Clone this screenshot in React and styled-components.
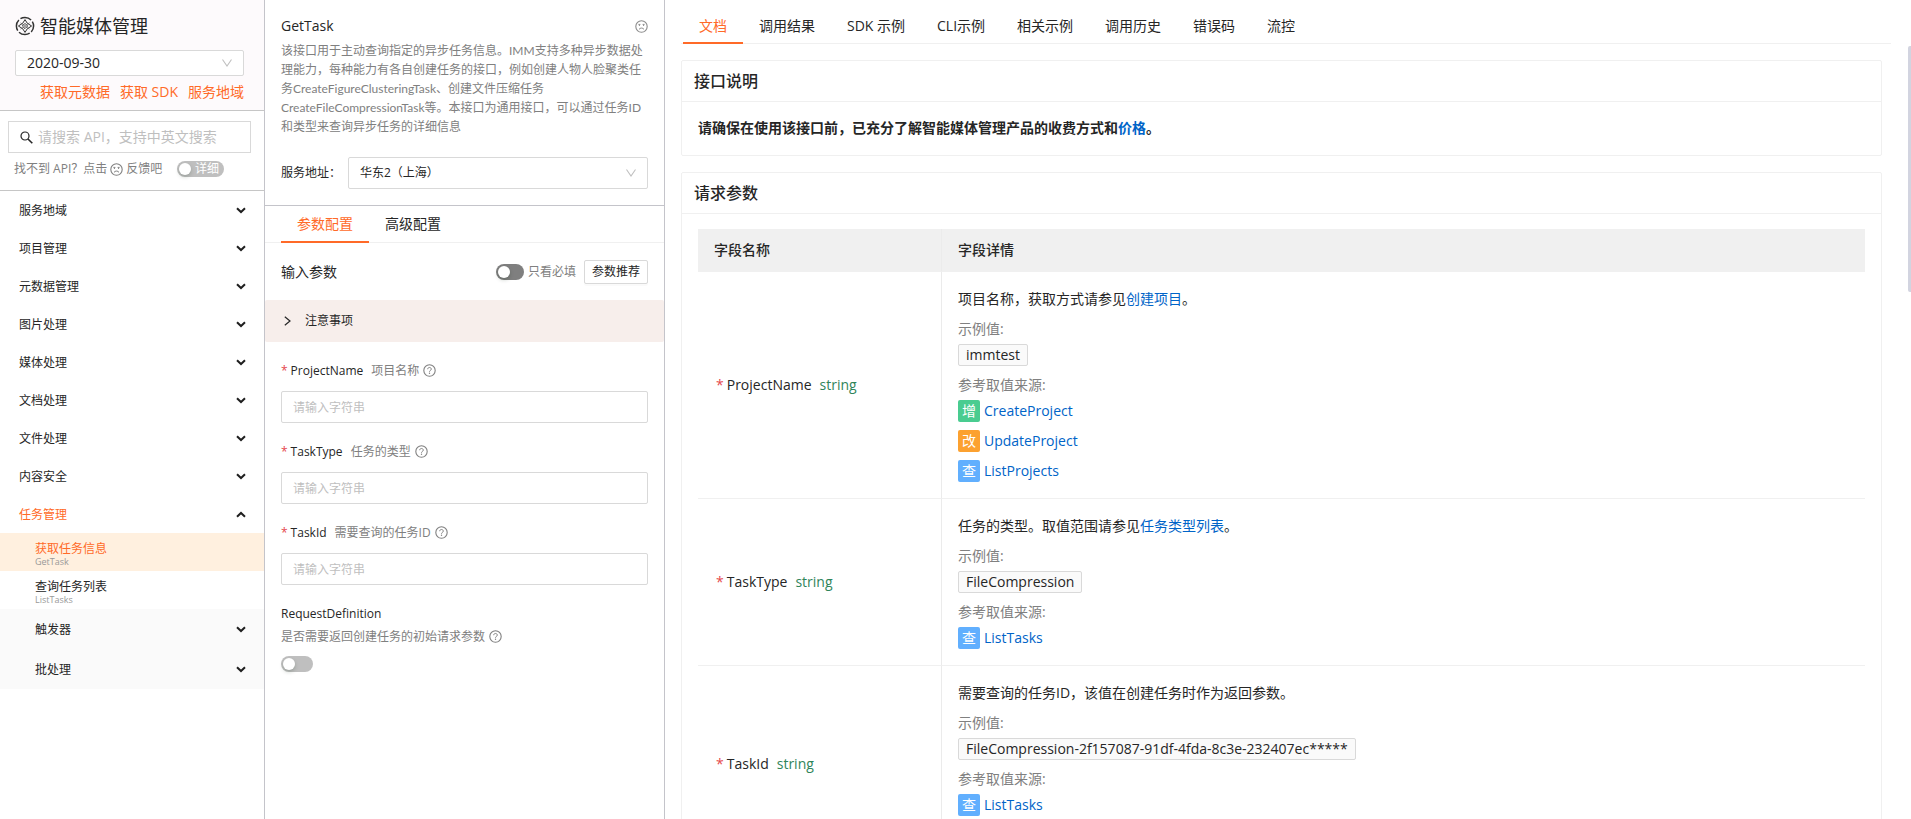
import React, { useState } from 'react';
import styled, { createGlobalStyle } from 'styled-components';

const GlobalStyle = createGlobalStyle`
  * {
    box-sizing: border-box;
  }
  body {
    margin: 0;
    background: #fff;
    color: #262626;
    font-family: 'Open Sans', 'Noto Sans CJK SC', sans-serif;
    font-size: 14px;
    line-height: 22px;
  }
  button,
  input,
  select {
    font: inherit;
    color: inherit;
    margin: 0;
  }
  a {
    text-decoration: none;
  }
`;

const Page = styled.div`
  display: flex;
  height: 100vh;
  overflow: hidden;
`;

const Sidebar = styled.aside`
  flex: none;
  width: 265px;
  border-right: 1px solid #c4c4ca;
  overflow-y: auto;
  scrollbar-width: none;
`;

const ProductHeader = styled.header`
  display: flex;
  flex-direction: column;
  padding: 14px 20px 7px 15px;
  background: #fdfafc;
  border-bottom: 1px solid #c6c6c6;
`;

const ProductTitle = styled.h1`
  display: flex;
  align-items: center;
  gap: 5px;
  margin: 0 0 12px;
  font-size: 18px;
  line-height: 24px;
  font-weight: 400;
`;

const SelectBox = styled.div`
  display: flex;
  position: relative;
  flex: 1;
  color: #c0c0c0;
  svg {
    position: absolute;
    right: 11px;
    top: 50%;
    transform: translateY(-50%);
    pointer-events: none;
  }
`;

const Select = styled.select`
  flex: 1;
  height: ${(props) => (props.$small ? '26px' : '32px')};
  padding: 0 30px 0 11px;
  border: 1px solid #d9d9d9;
  border-radius: 2px;
  background: #fff;
  color: #262626;
  font-size: ${(props) => (props.$small ? '14px' : '12px')};
  appearance: none;
  outline: none;
`;

const QuickLinks = styled.nav`
  display: flex;
  justify-content: flex-end;
  gap: 10px;
  margin-top: 5px;
  a {
    color: #ff6a28;
  }
`;

const SearchArea = styled.div`
  padding: 10px 13px 8px 8px;
  border-bottom: 1px solid #c6c6c6;
`;

const SearchBox = styled.label`
  display: flex;
  align-items: center;
  gap: 5px;
  height: 32px;
  padding: 0 11px;
  border: 1px solid #d9d9d9;
`;

const SearchInput = styled.input`
  flex: 1;
  min-width: 0;
  padding: 0;
  border: none;
  outline: none;
  &::placeholder {
    color: #bfbfbf;
  }
`;

const HelpRow = styled.div`
  display: flex;
  align-items: center;
  justify-content: space-between;
  height: 20px;
  margin: 6px 27px 3px 6px;
  color: #808080;
  font-size: 12px;
`;

const HelpText = styled.span`
  display: flex;
  align-items: center;
  gap: 3px;
`;

const SwitchTrack = styled.label`
  display: inline-flex;
  align-items: center;
  flex: none;
  gap: 4px;
  width: ${(props) => props.$width}px;
  height: 16px;
  padding: 0 2px;
  border-radius: 8px;
  background: ${(props) => (props.$dark ? '#7f7f7f' : '#bfbfbf')};
  color: #fff;
  font-size: 12px;
  line-height: 16px;
  cursor: pointer;
`;

const SwitchInput = styled.input`
  flex: none;
  width: 12px;
  height: 12px;
  border-radius: 50%;
  background: #fff;
  box-shadow: 0 2px 4px rgba(0, 35, 11, 0.2);
  appearance: none;
  cursor: pointer;
`;

const Menu = styled.ul`
  margin: 0;
  padding: 0;
  list-style: none;
  font-size: 12px;
`;

const MenuButton = styled.button`
  display: flex;
  align-items: center;
  justify-content: space-between;
  width: 100%;
  height: ${(props) => (props.$sub ? '40px' : '38px')};
  padding: 1px 18px 0 ${(props) => (props.$sub ? '35px' : '19px')};
  border: none;
  background: ${(props) => (props.$sub ? '#fafafa' : 'transparent')};
  text-align: left;
  cursor: pointer;
  span {
    color: ${(props) => (props.$active ? '#ff6a28' : '#262626')};
  }
`;

const ApiLink = styled.a`
  display: flex;
  flex-direction: column;
  justify-content: center;
  height: 38px;
  padding: 3px 0 0 35px;
  background: ${(props) => (props.$active ? '#fff0df' : '#fff')};
  color: ${(props) => (props.$active ? '#ff6a28' : '#262626')};
  line-height: 16px;
  small {
    color: #999;
    font-size: 9px;
    line-height: 10px;
  }
`;

const ConfigPane = styled.section`
  flex: none;
  width: 400px;
  border-right: 1px solid #c4c4ca;
  overflow-y: auto;
  scrollbar-width: none;
`;

const ApiSummary = styled.header`
  padding: 14px 16px 16px;
  border-bottom: 1px solid #c4c4ca;
`;

const ApiHeading = styled.div`
  display: flex;
  align-items: center;
  justify-content: space-between;
  height: 24px;
  color: #8c8c8c;
  h2 {
    margin: 0;
    color: #262626;
    font-size: 14px;
    font-weight: 400;
  }
`;

const ApiDescription = styled.p`
  margin: 3px 0 21px;
  color: #808080;
  font-family: Lato, 'Noto Sans CJK SC', sans-serif;
  font-size: 12px;
  line-height: 19px;
`;

const RegionRow = styled.div`
  display: flex;
  align-items: center;
  font-size: 12px;
  label {
    width: 67px;
  }
`;

const TabBar = styled.nav`
  display: flex;
  height: ${(props) => (props.$large ? '44px' : '37px')};
  padding-left: ${(props) => props.$inset}px;
  box-shadow: inset 0 -1px #f0f0f0;
`;

const Tab = styled.button`
  padding: ${(props) => (props.$large ? '10px 16px 0' : '0 16px')};
  border: none;
  border-bottom: 2px solid ${(props) => (props.$active ? '#ff6a28' : 'transparent')};
  background: none;
  color: ${(props) => (props.$active ? '#ff6a28' : '#262626')};
  cursor: pointer;
`;

const ParamToolbar = styled.div`
  display: flex;
  align-items: center;
  gap: 8px;
  padding: 17px 16px 16px;
  h3 {
    flex: 1;
    margin: 0;
    font-size: 14px;
    font-weight: 400;
  }
`;

const RequiredFilter = styled.div`
  display: flex;
  align-items: center;
  gap: 4px;
  color: #808080;
  font-size: 12px;
`;

const SmallButton = styled.button`
  width: 64px;
  height: 24px;
  padding: 0;
  border: 1px solid #d9d9d9;
  border-radius: 2px;
  background: #fff;
  box-shadow: 0 2px 0 rgba(0, 0, 0, 0.02);
  font-size: 12px;
  line-height: 20px;
  cursor: pointer;
`;

const NoticeButton = styled.button`
  display: flex;
  align-items: center;
  gap: 14px;
  width: 100%;
  height: 42px;
  padding: 0 19px;
  border: none;
  border-radius: 2px;
  background: #f7eeeb;
  font-size: 12px;
  cursor: pointer;
`;

const ParamForm = styled.form`
  display: flex;
  flex-direction: column;
  gap: 18px;
  padding: 18px 16px;
  font-size: 12px;
  line-height: 21px;
`;

const Field = styled.div`
  display: flex;
  flex-direction: column;
  gap: 10px;
`;

const FieldLabel = styled.label`
  display: flex;
  align-items: center;
`;

const Star = styled.span`
  margin-right: 3px;
  color: #e5484d;
`;

const FieldHint = styled.span`
  display: flex;
  align-items: center;
  gap: 4px;
  margin-left: ${(props) => (props.$block ? '0' : '8px')};
  color: #808080;
`;

const TextInput = styled.input`
  height: 32px;
  padding: 0 11px;
  border: 1px solid #d9d9d9;
  border-radius: 2px;
  outline: none;
  &::placeholder {
    color: #bfbfbf;
  }
`;

const FlagField = styled.div`
  display: flex;
  flex-direction: column;
  align-items: flex-start;
  gap: 2px;
  ${SwitchTrack} {
    margin-top: 7px;
  }
`;

const DocPane = styled.main`
  position: relative;
  display: flex;
  flex: 1;
  flex-direction: column;
  min-width: 0;
  padding: 0 20px 0 16px;
`;

const DocScroll = styled.div`
  flex: 1;
  overflow-y: auto;
  padding: 16px 9px 16px 0;
  scrollbar-width: none;
`;

const ScrollThumb = styled.span`
  position: absolute;
  top: 46px;
  right: 0;
  width: 3px;
  height: 30%;
  border-radius: 2px 0 0 2px;
  background: #d2d4e0;
`;

const Card = styled.section`
  margin-bottom: 16px;
  border: 1px solid #f0f0f0;
  border-radius: 2px;
`;

const CardTitle = styled.h2`
  margin: 0;
  padding: 8px 12px;
  border-bottom: 1px solid #f0f0f0;
  font-size: 16px;
  line-height: 24px;
  font-weight: 500;
`;

const Notice = styled.p`
  margin: 0;
  padding: 15px 16px 16px;
  font-weight: 700;
`;

const DocLink = styled.a`
  color: #0064c8;
`;

const FieldTable = styled.table`
  width: calc(100% - 32px);
  margin: 15px 16px;
  border-collapse: separate;
  border-spacing: 0;
  table-layout: fixed;
  th,
  td {
    padding: 16px;
    border-bottom: 1px solid #f0f0f0;
    text-align: left;
  }
  th {
    padding: 10px 16px;
    background: #f0f0f0;
    font-weight: 500;
  }
  th:first-child,
  td:first-child {
    width: 244px;
    border-right: 1px solid #ebebeb;
  }
  td:first-child {
    padding-left: 18px;
  }
`;

const TypeName = styled.span`
  margin-left: 8px;
  color: #2f855a;
`;

const Details = styled.div`
  display: flex;
  flex-direction: column;
  align-items: flex-start;
  gap: 8px;
`;

const DetailGroup = styled.div`
  display: flex;
  flex-direction: column;
  align-items: flex-start;
  gap: 4px;
`;

const Caption = styled.span`
  color: #808080;
`;

const ExampleTag = styled.code`
  padding: 0 7px;
  border: 1px solid #d9d9d9;
  border-radius: 2px;
  background: #fafafa;
  font-family: inherit;
  line-height: 20px;
`;

const SourceList = styled.div`
  display: flex;
  flex-direction: column;
  gap: 8px;
`;

const SourceLink = styled.a`
  display: flex;
  gap: 4px;
  color: #0064c8;
`;

const badgeColors = {
  增: '#49cc90',
  改: '#fca130',
  查: '#61affe',
};

const Badge = styled.span`
  width: 22px;
  height: 22px;
  border-radius: 2px;
  background: ${(props) => badgeColors[props.$kind]};
  color: #fff;
  text-align: center;
`;

const groups = [
  '服务地域',
  '项目管理',
  '元数据管理',
  '图片处理',
  '媒体处理',
  '文档处理',
  '文件处理',
  '内容安全',
];

const apis = [
  { title: '获取任务信息', name: 'GetTask' },
  { title: '查询任务列表', name: 'ListTasks' },
];

const docTabs = [
  '文档',
  '调用结果',
  'SDK 示例',
  'CLI示例',
  '相关示例',
  '调用历史',
  '错误码',
  '流控',
];

const params = [
  { name: 'ProjectName', hint: '项目名称' },
  { name: 'TaskType', hint: '任务的类型' },
  { name: 'TaskId', hint: '需要查询的任务ID' },
];

const fields = [
  {
    name: 'ProjectName',
    text: '项目名称，获取方式请参见',
    link: '创建项目',
    end: '。',
    example: 'immtest',
    sources: [
      ['增', 'CreateProject'],
      ['改', 'UpdateProject'],
      ['查', 'ListProjects'],
    ],
  },
  {
    name: 'TaskType',
    text: '任务的类型。取值范围请参见',
    link: '任务类型列表',
    end: '。',
    example: 'FileCompression',
    sources: [['查', 'ListTasks']],
  },
  {
    name: 'TaskId',
    text: '需要查询的任务ID，该值在创建任务时作为返回参数。',
    example: 'FileCompression-2f157087-91df-4fda-8c3e-232407ec*****',
    sources: [
      ['查', 'ListTasks'],
      ['增', 'CreateFileCompressionTask'],
    ],
  },
];

const ProductIcon = () => (
  <svg width="20" height="20" viewBox="0 0 20 20" fill="none" stroke="#333">
    <circle cx="10" cy="10" r="8.6" strokeWidth="1.5" strokeDasharray="11.5 2" strokeDashoffset="5" />
    <path d="M10 3.6Q11.2 7.6 16.6 10 11.2 12.4 10 16.4 8.8 12.4 3.4 10 8.8 7.6 10 3.6Z" />
    <path d="M5.4 6.8 14.6 13.2M14.6 6.8 5.4 13.2" strokeWidth="0.5" />
    <path d="M10 7.4 12.6 10 10 12.6 7.4 10Z" fill="#fdfafc" />
    <circle cx="10" cy="10" r="0.8" fill="#333" stroke="none" />
  </svg>
);

const DownArrow = () => (
  <svg width="12" height="12" viewBox="0 0 12 12" fill="none" stroke="currentColor">
    <path d="M1.5 2.5 6 9 10.5 2.5" strokeWidth="1.1" />
  </svg>
);

const MenuArrow = ({ up }) => (
  <svg width="10" height="12" viewBox="0 0 10 12" fill="none" stroke="#1f1f1f" strokeWidth="2">
    <path d={up ? 'M1 7.8 5 4 9 7.8' : 'M1 3.2 5 7 9 3.2'} />
  </svg>
);

const SadFace = () => (
  <svg width="13" height="13" viewBox="0 0 13 13" fill="none" stroke="currentColor">
    <circle cx="6.5" cy="6.5" r="5.7" strokeWidth="1.1" />
    <path d="M3.4 4.4h2M7.6 4.4h2M4.4 5v1M8.6 5v1" />
    <path d="M4 9.4c1-1.8 4-1.8 5 0" />
  </svg>
);

const HelpIcon = () => (
  <svg width="13" height="13" viewBox="0 0 13 13" fill="none" stroke="currentColor">
    <circle cx="6.5" cy="6.5" r="5.7" strokeWidth="1.1" />
    <path d="M4.7 5.2c0-2.3 3.6-2.3 3.6 0 0 1.2-1.8 1.2-1.8 2.5" />
    <circle cx="6.5" cy="9.3" r="0.7" fill="currentColor" stroke="none" />
  </svg>
);

const SearchIcon = () => (
  <svg width="13" height="13" viewBox="0 0 13 13" fill="none" stroke="#262626">
    <circle cx="5" cy="5" r="4" strokeWidth="1.2" />
    <path d="M8 8l4.3 4.3" strokeWidth="1.6" />
  </svg>
);

const Switch = ({ width, dark, label, children }) => (
  <SwitchTrack $width={width} $dark={dark}>
    <SwitchInput type="checkbox" role="switch" aria-label={label} />
    {children}
  </SwitchTrack>
);

const ApiSidebar = () => {
  const [current, setCurrent] = useState('GetTask');

  return (
    <Sidebar>
      <ProductHeader>
        <ProductTitle>
          <ProductIcon />
          智能媒体管理
        </ProductTitle>
        <SelectBox>
          <Select $small aria-label="版本">
            <option>2020-09-30</option>
          </Select>
          <DownArrow />
        </SelectBox>
        <QuickLinks>
          <a href="#meta">获取元数据</a>
          <a href="#sdk">获取 SDK</a>
          <a href="#region">服务地域</a>
        </QuickLinks>
      </ProductHeader>
      <SearchArea>
        <SearchBox>
          <SearchIcon />
          <SearchInput aria-label="搜索 API" placeholder="请搜索 API，支持中英文搜索" />
        </SearchBox>
        <HelpRow>
          <HelpText>
            找不到 API？点击
            <SadFace />
            反馈吧
          </HelpText>
          <Switch width={47} label="详细">
            详细
          </Switch>
        </HelpRow>
      </SearchArea>
      <Menu>
        {groups.map((group) => (
          <li key={group}>
            <MenuButton>
              <span>{group}</span>
              <MenuArrow />
            </MenuButton>
          </li>
        ))}
        <li>
          <MenuButton $active>
            <span>任务管理</span>
            <MenuArrow up />
          </MenuButton>
          <Menu>
            {apis.map((api) => (
              <li key={api.name}>
                <ApiLink
                  href={`#${api.name}`}
                  $active={api.name === current}
                  onClick={() => setCurrent(api.name)}
                >
                  {api.title}
                  <small>{api.name}</small>
                </ApiLink>
              </li>
            ))}
            {['触发器', '批处理'].map((group) => (
              <li key={group}>
                <MenuButton $sub>
                  <span>{group}</span>
                  <MenuArrow />
                </MenuButton>
              </li>
            ))}
          </Menu>
        </li>
      </Menu>
    </Sidebar>
  );
};

const ParamConfig = () => {
  const [tab, setTab] = useState('参数配置');

  return (
    <ConfigPane>
      <ApiSummary>
        <ApiHeading>
          <h2>GetTask</h2>
          <SadFace />
        </ApiHeading>
        <ApiDescription>
          该接口用于主动查询指定的异步任务信息。IMM支持多种异步数据处理能力，每种能力有各自创建任务的接口，例如创建人物人脸聚类任务CreateFigureClusteringTask、创建文件压缩任务CreateFileCompressionTask等。本接口为通用接口，可以通过任务ID和类型来查询异步任务的详细信息
        </ApiDescription>
        <RegionRow>
          <label htmlFor="region">服务地址：</label>
          <SelectBox>
            <Select id="region">
              <option>华东2（上海）</option>
            </Select>
            <DownArrow />
          </SelectBox>
        </RegionRow>
      </ApiSummary>
      <TabBar $inset={16}>
        {['参数配置', '高级配置'].map((item) => (
          <Tab key={item} $active={item === tab} onClick={() => setTab(item)}>
            {item}
          </Tab>
        ))}
      </TabBar>
      <ParamToolbar>
        <h3>输入参数</h3>
        <RequiredFilter>
          <Switch width={28} dark label="只看必填" />
          只看必填
        </RequiredFilter>
        <SmallButton>参数推荐</SmallButton>
      </ParamToolbar>
      <NoticeButton>
        <svg width="7" height="10" viewBox="0 0 7 10" fill="none" stroke="#262626" strokeWidth="1.2">
          <path d="M0.8 0.8 6 5 0.8 9.2" />
        </svg>
        注意事项
      </NoticeButton>
      <ParamForm>
        {params.map((param) => (
          <Field key={param.name}>
            <FieldLabel htmlFor={param.name}>
              <Star>*</Star>
              {param.name}
              <FieldHint>
                {param.hint}
                <HelpIcon />
              </FieldHint>
            </FieldLabel>
            <TextInput id={param.name} placeholder="请输入字符串" />
          </Field>
        ))}
        <FlagField>
          <span>RequestDefinition</span>
          <FieldHint $block>
            是否需要返回创建任务的初始请求参数
            <HelpIcon />
          </FieldHint>
          <Switch width={32} label="RequestDefinition" />
        </FlagField>
      </ParamForm>
    </ConfigPane>
  );
};

const ApiDoc = () => {
  const [tab, setTab] = useState('文档');

  return (
    <DocPane>
      <TabBar $large $inset={2}>
        {docTabs.map((item) => (
          <Tab key={item} $large $active={item === tab} onClick={() => setTab(item)}>
            {item}
          </Tab>
        ))}
      </TabBar>
      <DocScroll>
        <Card>
          <CardTitle>接口说明</CardTitle>
          <Notice>
            请确保在使用该接口前，已充分了解智能媒体管理产品的收费方式和
            <DocLink href="#price">价格</DocLink>。
          </Notice>
        </Card>
        <Card>
          <CardTitle>请求参数</CardTitle>
          <FieldTable>
            <thead>
              <tr>
                <th>字段名称</th>
                <th>字段详情</th>
              </tr>
            </thead>
            <tbody>
              {fields.map((field) => (
                <tr key={field.name}>
                  <td>
                    <Star>*</Star>
                    {field.name}
                    <TypeName>string</TypeName>
                  </td>
                  <td>
                    <Details>
                      <span>
                        {field.text}
                        {field.link && <DocLink href="#doc">{field.link}</DocLink>}
                        {field.end}
                      </span>
                      <DetailGroup>
                        <Caption>示例值:</Caption>
                        <ExampleTag>{field.example}</ExampleTag>
                      </DetailGroup>
                      <DetailGroup>
                        <Caption>参考取值来源:</Caption>
                        <SourceList>
                          {field.sources.map(([kind, api]) => (
                            <SourceLink key={api} href={`#${api}`}>
                              <Badge $kind={kind}>{kind}</Badge>
                              {api}
                            </SourceLink>
                          ))}
                        </SourceList>
                      </DetailGroup>
                    </Details>
                  </td>
                </tr>
              ))}
            </tbody>
          </FieldTable>
        </Card>
      </DocScroll>
      <ScrollThumb />
    </DocPane>
  );
};

const App = () => (
  <>
    <GlobalStyle />
    <Page>
      <ApiSidebar />
      <ParamConfig />
      <ApiDoc />
    </Page>
  </>
);

export default App;
